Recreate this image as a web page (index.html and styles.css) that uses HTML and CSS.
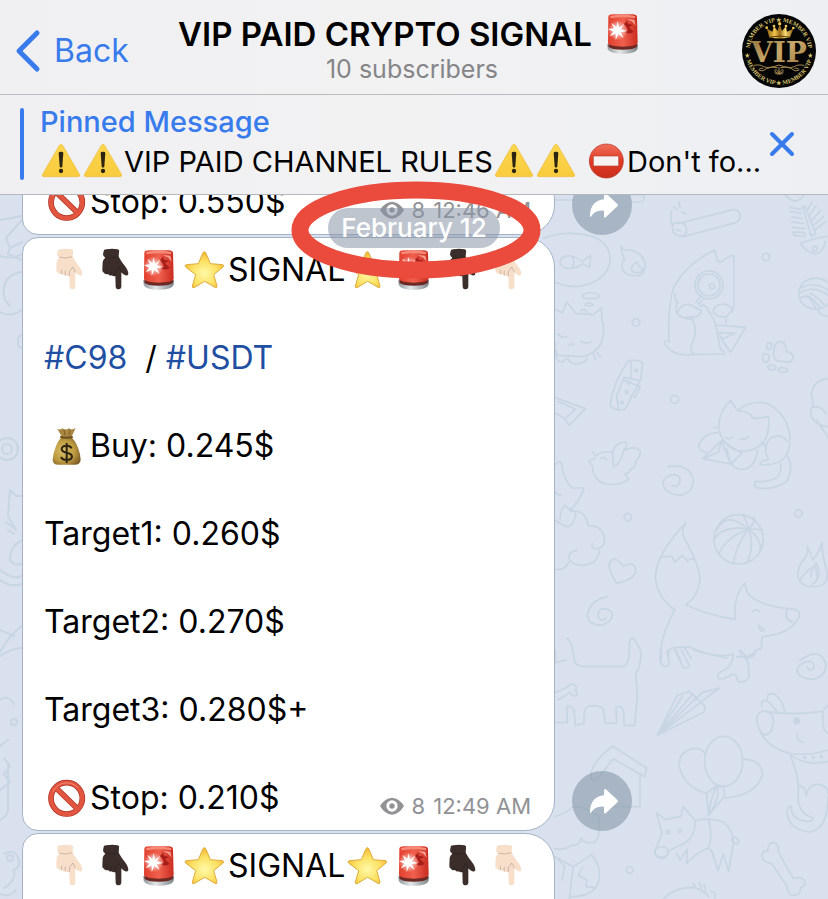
FILE: index.html
```html
<!DOCTYPE html>
<html lang="en">
<head>
<meta charset="utf-8">
<meta name="viewport" content="width=device-width, initial-scale=1">
<title>VIP PAID CRYPTO SIGNAL</title>
<link rel="stylesheet" href="styles.css">
</head>
<body>
<svg class="sprite" aria-hidden="true">
  <defs>
    <linearGradient id="glass" x1="0" y1="0" x2="1" y2="0"><stop offset="0" stop-color="#e2402f"/><stop offset=".5" stop-color="#f0604d"/><stop offset="1" stop-color="#c92c20"/></linearGradient>
    <linearGradient id="metal" x1="0" y1="0" x2="1" y2="0"><stop offset="0" stop-color="#8f989c"/><stop offset=".4" stop-color="#e3e7e8"/><stop offset="1" stop-color="#7c8488"/></linearGradient>
    <radialGradient id="glow"><stop offset="0" stop-color="#fff"/><stop offset=".4" stop-color="#fff" stop-opacity=".6"/><stop offset="1" stop-color="#fff" stop-opacity="0"/></radialGradient>
    <radialGradient id="gold" cx=".5" cy=".6" r=".55"><stop offset="0" stop-color="#fff9a8"/><stop offset=".6" stop-color="#fce265"/><stop offset="1" stop-color="#f6bd3c"/></radialGradient>
    <linearGradient id="amber" x1="0" y1="0" x2="0" y2="1"><stop offset="0" stop-color="#fbd64e"/><stop offset="1" stop-color="#f9cb3e"/></linearGradient>
    <linearGradient id="stopred" x1="0" y1="0" x2="0" y2="1"><stop offset="0" stop-color="#f0705c"/><stop offset=".5" stop-color="#e03a25"/><stop offset="1" stop-color="#c92f1c"/></linearGradient>
    <radialGradient id="sack" cx=".4" cy=".5" r=".65"><stop offset="0" stop-color="#dcc069"/><stop offset=".6" stop-color="#bd9a3f"/><stop offset="1" stop-color="#80602a"/></radialGradient>
    <linearGradient id="bronze" x1="0" y1="0" x2="1" y2="1"><stop offset="0" stop-color="#8d6c38"/><stop offset=".5" stop-color="#c9a86a"/><stop offset="1" stop-color="#9a783f"/></linearGradient>
    <linearGradient id="crown" x1="0" y1="0" x2="1" y2="0"><stop offset="0" stop-color="#8d5e12"/><stop offset=".3" stop-color="#f0c74b"/><stop offset=".5" stop-color="#9c6c17"/><stop offset=".7" stop-color="#f8db72"/><stop offset="1" stop-color="#8d5e12"/></linearGradient>
  </defs>
  <symbol id="hand" viewBox="72 252 138 132">
    <path fill="currentColor" d="M113 262Q112 256 121 256Q139 253 155 256Q161 258 159 265L158 278Q167 294 175 304Q187 319 187 330Q185 336 178 334Q170 331 166 325L166 369Q165 376 158 376Q150 376 149 368L148 336Q142 338 137 334Q130 336 126 330Q117 332 114 326Q108 324 109 317L110 294Q111 286 118 281Q111 277 111 271Z"/>
    <path class="hand-crease" d="M118 279Q135 286 157 278M126 330Q123 323 125 317M137 334Q134 326 136 320M148 336V322Q153 319 158 309Q162 314 166 325"/>
  </symbol>
  <symbol id="siren" viewBox="348 252 138 132">
    <path fill="url(#metal)" d="M370 348L462 348L461 362Q456 377 416 377Q376 377 371 362Z"/>
    <path fill="#6d2923" d="M374 344H458L459 356Q450 365 416 365Q382 365 373 356Z"/>
    <path fill="url(#glass)" d="M373 266Q374 259 387 259H446Q458 259 459 267L461 346Q452 356 416 356Q380 356 372 346Z"/>
    <path fill="#f58a78" d="M378 264Q416 257 454 264L453 271Q416 264 380 271Z"/>
    <path fill="#a81e1b" d="M420 288L431 276L430 286L447 291L435 297L449 311Q436 322 424 312L433 307Z"/>
    <path fill="#f9a091" d="M429 273L451 275L455 293L445 281Z"/>
    <circle cx="401" cy="307" r="30" fill="url(#glow)"/>
    <path fill="#fff" d="M401 279L405 299L421 287L410 304L430 309L410 313L419 330L403 318L395 336L395 317L377 325L388 311L372 303L390 301L382 284L397 297Z"/>
  </symbol>
  <symbol id="star" viewBox="486 252 138 132">
    <path fill="url(#gold)" stroke="#dfab3b" stroke-width="3" stroke-linejoin="round" d="M553 263Q556 263 558 268L571 299L608 302Q614 304 609 309L581 332L591 366Q591 373 585 370L554 352L522 371Q516 372 517 366L527 332L497 309Q492 304 499 302L535 299L548 268Q550 263 553 263Z"/>
  </symbol>
  <symbol id="forbid" viewBox="72 45 138 132">
    <circle cx="140" cy="112" r="47" fill="none" stroke="#a8301f" stroke-width="17"/>
    <path d="M106 79L174 145" stroke="#a8301f" stroke-width="17"/>
    <circle cx="140" cy="112" r="47" fill="none" stroke="#e25540" stroke-width="13"/>
    <path d="M106 79L174 145" stroke="#e25540" stroke-width="13"/>
    <path d="M98 94A46 46 0 0 1 174 80" fill="none" stroke="#f08a76" stroke-width="3"/>
  </symbol>
  <symbol id="bag" viewBox="72 279 138 132">
    <path fill="#a98742" d="M111 293Q120 299 127 292Q137 299 146 292Q155 299 167 291Q161 305 154 319H126Q119 304 111 293Z"/>
    <path fill="url(#sack)" d="M125 319H154Q166 329 174 350Q182 370 182 386Q181 401 164 401H115Q98 401 98 386Q99 370 106 351Q113 330 125 319Z"/>
    <path d="M123 318Q139 323 156 318" stroke="#6f5222" stroke-width="6" fill="none" stroke-linecap="round"/>
    <path d="M132 296L135 313M151 296L147 313" stroke="#806126" stroke-width="3"/>
    <path d="M155 352Q151 344 140 344Q126 344 125 354Q125 362 140 365Q156 368 156 377Q155 387 140 387Q127 387 123 378M140 336V396" stroke="#2e2614" stroke-width="6" fill="none"/>
  </symbol>
  <symbol id="warn" viewBox="120 426 126 120">
    <path fill="url(#amber)" stroke="#f0bd3a" stroke-width="2" stroke-linejoin="round" d="M178 436Q183 430 188 436L239 524Q240 530 234 530H132Q126 530 127 524Z"/>
    <path fill="#2b2412" d="M176 459Q176 455 183 455Q190 455 190 459L187 499Q186 503 183 503Q180 503 179 499Z"/><circle cx="183" cy="513" r="6.500" fill="#2b2412"/>
  </symbol>
  <symbol id="noentry" viewBox="513 426 126 120">
    <circle cx="577" cy="483" r="51" fill="url(#stopred)" stroke="#b8301f" stroke-width="2"/>
    <rect x="538" y="468" width="76" height="30" rx="3" fill="#f7f3f2" stroke="#b84233" stroke-width="2"/>
  </symbol>
  <symbol id="eye" viewBox="303 113 72 52">
    <path fill="currentColor" fill-rule="evenodd" d="M303 139Q318 115 339 114Q360 115 375 139Q360 164 339 165Q318 164 303 139ZM339 122A17 17 0 1 0 339 156A17 17 0 1 0 339 122Z"/><circle cx="339" cy="139" r="8" fill="currentColor"/>
  </symbol>
  <symbol id="forward" viewBox="66 360 180 180">
    <path fill="#fff" d="M165 415Q163 412 167 414L203 448Q205 450 203 453L167 487Q162 489 162 484V467Q136 464 122 486Q119 487 120 480Q122 438 162 433V417Z"/>
  </symbol>
</svg>

<div class="app">
  <header class="header">
    <nav class="topbar">
      <button class="back" type="button">
        <svg width="26" height="44" viewBox="0 0 26 44" aria-hidden="true"><path d="M22 4L4 22L22 40" fill="none" stroke="currentColor" stroke-width="5" stroke-linecap="round" stroke-linejoin="round"/></svg>
        <span>Back</span>
      </button>
      <div class="heading">
        <h1 class="title">VIP PAID CRYPTO SIGNAL <svg class="emoji" role="img" aria-label="🚨"><use href="#siren"/></svg></h1>
        <p class="subtitle">10 subscribers</p>
      </div>
      <svg class="avatar" viewBox="36 27 222 222" role="img" aria-label="VIP">
        <path id="ring-top" fill="none" d="M59 138A88 88 0 0 1 235 138"/>
        <path id="ring-bottom" fill="none" d="M46 138A101 101 0 0 0 248 138"/>
        <circle cx="147" cy="138" r="111" fill="#050505"/>
        <g class="ring-text">
          <text><textPath href="#ring-top" startOffset="50%">MEMBER VIP ★ MEMBER VIP</textPath></text>
          <text><textPath href="#ring-bottom" startOffset="50%">MEMBER VIP ★ MEMBER VIP</textPath></text>
        </g>
        <path fill="#d9c26f" d="M52 143l2 6h6l-5 4 2 6-5-4-5 4 2-6-5-4h6zM241 143l2 6h6l-5 4 2 6-5-4-5 4 2-6-5-4h6z"/>
        <path fill="url(#crown)" d="M118 97L110 70L127 80L132 64L143 78L149 57L156 78L168 64L171 80L190 71L180 97Q149 104 118 97Z"/>
        <g fill="#efc94e"><circle cx="110" cy="68" r="4"/><circle cx="132" cy="63" r="4"/><circle cx="149" cy="56" r="5"/><circle cx="168" cy="63" r="4"/><circle cx="190" cy="69" r="4"/></g>
        <path d="M117 97Q149 89 181 97" stroke="#5b3a08" stroke-width="3" fill="none"/>
        <text class="monogram" x="147" y="170">VIP</text>
        <path fill="none" stroke="#a68a50" stroke-width="3" stroke-linecap="round" d="M73 181Q90 177 101 185Q116 192 147 180Q178 192 193 185Q204 177 221 181M99 190Q85 188 88 196Q98 202 111 190Q125 183 142 188M195 190Q209 188 206 196Q196 202 183 190Q169 183 152 188M147 188V206M147 203Q137 190 134 196Q134 203 147 206Q160 203 160 196Q157 190 147 203M135 204Q141 209 147 207Q153 209 159 204"/>
      </svg>
    </nav>
    <section class="pinned" aria-label="Pinned message">
      <a class="pinned-link" href="#pinned">
        <strong class="pinned-title">Pinned Message</strong>
        <span class="pinned-text"><svg class="emoji" role="img" aria-label="⚠️"><use href="#warn"/></svg><svg class="emoji" role="img" aria-label="⚠️"><use href="#warn"/></svg>VIP PAID CHANNEL RULES<svg class="emoji" role="img" aria-label="⚠️"><use href="#warn"/></svg><svg class="emoji" role="img" aria-label="⚠️"><use href="#warn"/></svg> <svg class="emoji" role="img" aria-label="⛔"><use href="#noentry"/></svg>Don't fo...</span>
      </a>
      <button class="close" type="button" aria-label="Close">
        <svg width="26" height="26" viewBox="0 0 26 26" aria-hidden="true"><path d="M3 3L23 23M23 3L3 23" stroke="currentColor" stroke-width="4" stroke-linecap="round"/></svg>
      </button>
    </section>
  </header>

  <main class="chat">
    <svg class="wallpaper" viewBox="0 195 828 704" preserveAspectRatio="xMinYMin slice" aria-hidden="true">
      <g transform="translate(550 190) scale(.3333)">
        <path d="M15 30H70M245 15H282V28Q280 36 268 36H248M-20 145Q50 118 130 140Q190 165 178 225Q160 280 80 290Q30 290 -10 262M30 215Q36 195 62 198Q82 202 97 214L122 196L119 234L99 221Q80 236 54 236Q32 234 30 215M66 202Q78 214 66 230M213 166Q218 185 240 180Q285 190 286 230Q284 256 260 258Q220 256 216 232Q214 215 224 208Q214 190 213 166M244 240Q244 224 262 216Q264 232 280 236Q274 250 260 248Q248 248 244 240"/>
        <path d="M386 100L552 58Q572 62 570 80Q568 94 558 98L402 139Q382 142 370 126Q360 96 386 98Q408 98 410 118Q410 138 392 138M368 110Q358 84 364 64M372 50L382 58M386 36L390 52M396 66L408 72M378 118L392 124"/>
        <path d="M758 50L784 138L797 132L765 48ZM720 52L752 58M720 64L754 70M726 80L758 86M726 96L762 100M728 112L766 116M730 126L764 128V140L732 136ZM786 38L772 60M800 46L778 76M812 62L786 90M820 80L790 106M828 94L794 120M752 160Q780 148 834 138M752 162Q772 190 800 192Q820 184 826 154M802 176A6 6 0 1 0 788 176A6 6 0 1 0 802 176M706 16Q740 50 762 14"/>
        <path d="M357 456Q352 350 372 290Q410 220 494 180L503 212Q512 222 526 206Q544 192 552 200V350Q544 366 530 380Q500 384 490 364Q490 344 520 342Q544 344 548 366M357 456Q342 448 344 462Q370 500 420 494L522 492Q526 482 512 480M384 334Q376 350 380 366Q386 386 430 388M384 366Q392 340 420 344L454 362Q452 374 440 380L408 382M426 388Q446 420 426 460Q418 486 430 488M448 322L438 338M456 330L446 342M448 348Q470 340 476 366Q494 382 500 420L512 480M497 405L587 412L542 487L525 465L506 428L555 430L515 448L540 484M376 310Q372 330 384 340M528 386V402"/>
        <circle cx="477" cy="285" r="42"/><circle cx="477" cy="285" r="33"/><circle cx="486" cy="288" r="8"/><circle cx="648" cy="201" r="11"/><circle cx="258" cy="397" r="11"/><circle cx="374" cy="628" r="12"/>
        <path d="M834 278Q800 252 762 276Q738 300 750 330Q764 356 800 358Q822 354 834 342M752 294Q790 272 834 300M750 308Q790 284 834 316M752 324Q774 306 798 356M766 316Q790 322 810 354M780 310Q804 322 822 344M806 358Q802 374 834 380"/>
        <path d="M672 482Q672 458 692 454Q710 458 708 484Q734 488 728 508Q718 522 698 514Q666 516 672 482M650 468Q652 456 664 458Q668 468 660 478Q648 480 650 468M640 494Q652 486 658 500Q658 514 646 518Q634 510 640 494M652 532Q662 516 678 532Q676 542 662 540ZM684 540Q692 524 714 540Q710 550 692 546Z"/>
        <path d="M96 315Q124 300 148 315Q150 326 120 326Q96 326 96 315M104 344Q116 334 130 344Q116 352 104 344M92 362Q104 354 112 366M12 356Q26 364 38 368L50 336L78 370L130 374L154 354L156 388Q168 430 152 462Q138 488 100 500L24 496Q12 480 16 460M24 432Q34 446 50 440M94 456Q108 462 122 456M56 466Q64 460 72 464M16 490Q20 516 36 516Q48 504 54 508Q72 530 90 520Q108 516 112 504M130 490L136 508M142 488L152 502"/>
        <path d="M234 514Q254 506 278 518L272 570L226 656Q210 668 180 648Q188 580 234 514M244 516V566L222 562L200 618L206 660M220 570L250 582L270 590L256 622L242 616M244 566L268 572M12 622L106 656L58 706L44 686L14 668M24 634L76 658L44 686"/><circle cx="258" cy="542" r="4"/><circle cx="236" cy="578" r="4"/><circle cx="230" cy="606" r="4"/><circle cx="216" cy="638" r="4"/>
        <path d="M834 566Q790 570 784 612Q792 640 788 650Q776 660 786 682Q800 708 834 710M790 652Q812 644 828 672"/>
      </g>
      <g transform="translate(550 420) scale(.3333)">
        <path d="M506 20Q508 -30 542 -58L564 -26Q590 -30 612 -4L656 -10Q660 40 640 68Q600 106 550 88Q510 64 506 20M565 -30Q600 -60 650 -50Q712 -20 720 50Q722 80 708 108Q684 138 632 134Q626 124 656 118Q636 86 660 56Q690 36 712 64M712 108Q732 140 712 182Q680 210 624 204Q608 198 616 184Q660 188 684 170Q696 150 692 130M502 38Q458 40 446 78Q452 94 468 98M514 62L458 116L542 132L576 100ZM514 62L506 96L458 116M514 62L542 132L530 86M544 132Q560 154 590 146Q616 136 624 90M526 52Q536 60 548 52M570 56Q584 60 596 50M490 22L500 24M634 66L646 78"/>
        <path d="M128 96L138 108Q154 92 180 96L188 100Q192 66 228 66Q234 78 220 92Q248 76 270 90Q274 110 256 124Q262 140 240 148Q244 158 224 162L236 178Q210 198 168 192Q128 180 128 140L116 122L134 114M188 100L190 140Q214 130 220 92M152 116Q164 106 170 120M354 140Q420 130 430 180Q430 218 390 226Q344 222 338 190Q344 164 376 164Q396 170 388 190Q380 204 366 196"/>
        <circle cx="233" cy="292" r="11"/><circle cx="745" cy="280" r="11"/>
        <path d="M12 140Q24 120 34 128Q40 180 66 204L102 204Q92 240 60 270Q80 268 76 290Q64 330 40 316L12 300M30 300Q30 270 44 256L64 274Q104 266 116 318Q160 314 164 362Q158 390 134 386Q120 380 128 372M148 392Q144 434 98 436Q64 436 58 416Q54 394 80 392M58 424Q44 454 12 448M12 210Q20 226 34 226"/>
        <path d="M200 490Q174 452 178 428Q194 402 220 440Q250 420 258 450Q254 480 200 490M172 530Q120 540 112 586Q112 612 150 616Q190 606 186 580Q176 562 152 568Q136 582 150 598Q162 604 168 594"/>
        <circle cx="566" cy="358" r="74"/><path d="M596 328Q530 270 500 330M596 328Q520 314 492 358M596 328Q530 350 506 402M596 328Q560 370 550 430M596 328Q614 370 594 424M596 328Q638 360 630 394M596 328Q620 326 636 330M596 328Q590 300 580 288M596 328Q620 300 610 292"/>
        <path d="M408 308Q320 400 316 470Q320 530 374 570Q330 650 330 720M408 308Q390 330 404 356Q450 440 450 480Q444 530 408 554Q470 584 556 598Q548 530 584 490Q590 520 602 530Q640 560 734 568Q754 574 746 594Q720 644 636 650L634 686Q612 690 612 706Q580 730 568 690M334 412L364 408L376 426L396 406L412 422L432 414M710 570Q704 604 730 606M608 574Q620 564 628 576M626 616L644 630Q630 640 626 616M356 720Q352 690 364 684L416 680Q460 700 530 714M376 688L392 720M404 684L424 716"/>
        <path d="M772 380Q776 400 766 412Q736 450 746 476Q760 508 810 498Q834 490 832 456Q816 410 816 366Q810 396 788 420Q782 400 772 380M752 478Q770 450 794 438Q800 450 802 474M782 470Q784 450 798 428Q820 470 786 494M800 0L834 52"/>
      </g>
      <g transform="translate(550 650) scale(.3333)">
        <path d="M50 -35Q66 -30 74 34Q76 50 120 50H220Q240 48 238 -20Q242 -46 254 -30L272 0Q276 40 258 70L262 140L254 226H222V190Q216 162 198 172L200 220H166L160 176Q146 164 116 168Q100 170 102 220L76 226L72 180Q56 160 50 172L52 218H12M12 130L52 112Q60 98 74 104Q84 112 76 120Q86 132 78 138Q66 138 60 128L24 150M16 0V38L48 30"/>
        <path d="M322 256L382 136L418 124L466 170L462 186ZM322 256L508 114L456 128L322 256M322 256L428 132L436 142M322 256L398 138M334 0L332 40Q344 56 358 44L352 0M374 0L398 50Q412 58 418 46L394 0M430 0Q510 26 550 12Q550 46 522 60Q500 70 504 84Q516 92 546 74Q560 70 564 94Q582 100 596 84Q600 20 570 0M560 20Q606 26 620 0M750 32Q810 -14 828 44Q826 84 786 88Q738 84 742 56Q754 34 780 34Q800 42 788 58Q778 64 772 52"/>
        <path d="M132 394L122 384Q120 340 188 288L290 354L284 380L190 326L140 390M270 374V470H190M620 208Q624 180 648 184Q674 194 670 220Q666 252 646 254Q626 250 620 208M648 184Q720 198 820 184Q812 240 834 250M820 180L834 166M632 248Q660 300 730 312Q790 316 834 300M636 170Q630 140 660 158L680 184M652 148Q650 126 672 132Q700 150 704 186M742 252Q738 274 760 276M720 316Q750 380 744 440Q744 490 790 504Q790 516 770 514Q720 508 724 468Q706 470 714 502Q724 540 780 546Q834 536 834 440M746 410Q766 404 768 438Q776 400 810 404Q834 410 834 430M724 316Q770 350 834 334"/><circle cx="740" cy="212" r="8" fill="#c8d5e2"/><circle cx="764" cy="322" r="3"/><circle cx="790" cy="322" r="3"/><circle cx="814" cy="320" r="3"/>
        <ellipse cx="521" cy="334" rx="57" ry="75"/><path d="M466 310Q450 292 426 296Q386 306 388 350Q402 412 470 430M578 328Q632 326 638 372Q620 436 526 444M498 408L470 430L476 496L524 438L522 412ZM500 408Q480 450 476 496M500 408Q514 440 476 496M320 490L336 552L314 604Q316 624 336 626Q356 620 354 604L410 576Q440 550 434 510L400 470L392 500L346 508L320 490M434 514Q460 500 520 516Q550 540 550 580L544 616L536 664L520 612L504 662L484 600M550 560Q570 566 566 580Q556 586 544 570M474 506Q490 550 476 594Q450 600 410 640L412 598L390 630L380 610M476 596Q486 600 492 620"/><ellipse cx="335" cy="606" rx="20" ry="16"/><circle cx="354" cy="546" r="5"/><circle cx="389" cy="542" r="5"/>
        <path d="M664 640Q632 634 636 612Q642 600 654 602Q652 578 672 578Q690 584 684 604L730 686Q760 676 766 698Q764 710 752 712Q754 736 730 736Q710 732 712 710ZM340 747Q370 712 430 712Q460 718 476 740M430 700L438 714M448 698L454 716M462 704L468 724M482 724Q500 724 494 747M14 500Q50 490 66 472Q96 464 146 500Q154 570 130 578Q100 580 94 564Q90 590 62 586Q50 602 14 596M14 620L70 650L124 614Q150 640 148 680Q144 740 62 740M70 650L58 747M98 652L84 676L110 690L108 710L132 712M20 624L44 650L36 690"/><circle cx="239" cy="660" r="10"/>
      </g>
      <g transform="translate(0 190)">
        <path d="M0 30Q12 28 22 26M6 48L22 30M6 48L10 58L22 52M10 58L8 64L22 70M0 66Q12 70 22 64M22 82Q6 84 4 98Q2 108 10 116M0 122Q10 128 22 120M22 145Q18 146 18 150V156L22 158"/>
        <circle cx="7" cy="259" r="11"/><circle cx="7" cy="259" r="5"/>
        <path d="M10 300L16 306H22M10 300L8 326L16 340M6 332L14 338M8 340L14 344M22 350Q10 356 10 370Q14 376 22 374M0 380Q12 390 22 386M0 390Q10 398 22 394M0 462Q10 444 22 436M0 466Q12 458 22 458M0 440L14 446M0 510Q8 504 14 514M0 556L8 550M4 568L10 576L4 584L10 592L0 600M8 574V620Q6 628 0 630M4 664Q14 658 18 668Q22 676 14 680Q16 692 4 698M0 704Q10 708 16 700"/>
        <circle cx="14" cy="532" r="3"/><circle cx="10" cy="668" r="3"/>
      </g>
    </svg>

    <ol class="messages">
      <li class="message">
        <article class="bubble">
          <div class="last-line">
            <p><svg class="emoji" role="img" aria-label="🚫"><use href="#forbid"/></svg>Stop: 0.550$</p>
            <p class="meta"><svg class="eye" role="img" aria-label="Views"><use href="#eye"/></svg><span>8</span><time>12:46 AM</time></p>
          </div>
        </article>
        <button class="share" type="button" aria-label="Forward"><svg aria-hidden="true"><use href="#forward"/></svg></button>
      </li>
      <li class="message">
        <article class="bubble">
          <p><svg class="emoji light" role="img" aria-label="👇🏻"><use href="#hand"/></svg><svg class="emoji dark" role="img" aria-label="👇🏿"><use href="#hand"/></svg><svg class="emoji" role="img" aria-label="🚨"><use href="#siren"/></svg><svg class="emoji" role="img" aria-label="⭐"><use href="#star"/></svg>SIGNAL<svg class="emoji" role="img" aria-label="⭐"><use href="#star"/></svg><svg class="emoji" role="img" aria-label="🚨"><use href="#siren"/></svg><svg class="emoji dark" role="img" aria-label="👇🏿"><use href="#hand"/></svg><svg class="emoji light" role="img" aria-label="👇🏻"><use href="#hand"/></svg></p>
          <p><a href="#C98">#C98</a>&nbsp; / <a href="#USDT">#USDT</a></p>
          <p><svg class="emoji" role="img" aria-label="💰"><use href="#bag"/></svg>Buy: 0.245$</p>
          <p>Target1: 0.260$</p>
          <p>Target2: 0.270$</p>
          <p>Target3: 0.280$+</p>
          <div class="last-line">
            <p><svg class="emoji" role="img" aria-label="🚫"><use href="#forbid"/></svg>Stop: 0.210$</p>
            <p class="meta"><svg class="eye" role="img" aria-label="Views"><use href="#eye"/></svg><span>8</span><time>12:49 AM</time></p>
          </div>
        </article>
        <button class="share" type="button" aria-label="Forward"><svg aria-hidden="true"><use href="#forward"/></svg></button>
      </li>
      <li class="message">
        <article class="bubble">
          <p><svg class="emoji light" role="img" aria-label="👇🏻"><use href="#hand"/></svg><svg class="emoji dark" role="img" aria-label="👇🏿"><use href="#hand"/></svg><svg class="emoji" role="img" aria-label="🚨"><use href="#siren"/></svg><svg class="emoji" role="img" aria-label="⭐"><use href="#star"/></svg>SIGNAL<svg class="emoji" role="img" aria-label="⭐"><use href="#star"/></svg><svg class="emoji" role="img" aria-label="🚨"><use href="#siren"/></svg><svg class="emoji dark" role="img" aria-label="👇🏿"><use href="#hand"/></svg><svg class="emoji light" role="img" aria-label="👇🏻"><use href="#hand"/></svg></p>
        </article>
      </li>
    </ol>
  </main>

  <div class="date-marker">
    <time class="date">February 12</time>
    <svg class="circle-mark" viewBox="0 0 250 98" aria-hidden="true"><ellipse cx="125" cy="49" rx="116" ry="40" fill="none" stroke="#ea4b3c" stroke-width="17"/></svg>
  </div>
</div>
</body>
</html>
```
FILE: styles.css
```css
* { box-sizing: border-box; }

body {
  margin: 0;
  font-family: Inter, "Liberation Sans", sans-serif;
  color: #000;
  background: #d8e1ed;
}

h1, p, ol { margin: 0; padding: 0; }

button {
  border: 0;
  padding: 0;
  background: none;
  font: inherit;
  color: inherit;
}

a { color: #1f4fa3; text-decoration: none; }

.sprite { position: absolute; width: 0; height: 0; }

.app {
  position: relative;
  display: flex;
  flex-direction: column;
  height: 100vh;
  overflow: hidden;
}

/* Header */
.header { background: linear-gradient(90deg, #f0f0f2, #f2f2f3 50%, #edeff2); }

.topbar {
  display: grid;
  grid-template-columns: 1fr auto 1fr;
  align-items: center;
  padding: 10px 12px 2px;
  height: 95px;
  border-bottom: 1px solid #babbc0;
}

.back {
  display: flex;
  align-items: center;
  gap: 13px;
  justify-self: start;
  padding-left: 3px;
  font-size: 32px;
  line-height: 40px;
  color: #387bec;
}

.heading { margin-right: 4px; text-align: center; white-space: nowrap; }

.title {
  display: flex;
  align-items: center;
  justify-content: center;
  gap: 8px;
  font-size: 33px;
  line-height: 36px;
  font-weight: 600;
}

.title .emoji { margin: -4px 0; }

.subtitle { font-size: 25px; line-height: 34px; color: #858588; }

.avatar { width: 74px; height: 74px; justify-self: end; }

.ring-text {
  font: bold 18px "Liberation Serif", "DejaVu Serif", serif;
  fill: #d9c26f;
  text-anchor: middle;
}

.monogram {
  font: bold 84px "DejaVu Serif", serif;
  fill: url(#bronze);
  text-anchor: middle;
}

.pinned {
  display: flex;
  align-items: center;
  gap: 8px;
  padding: 7px 33px 12px 20px;
  border-bottom: 1px solid #b5b8bf;
}

.pinned-link {
  position: relative;
  flex: 1;
  min-width: 0;
  padding-left: 20px;
  color: #000;
}

.pinned-link::before {
  content: "";
  position: absolute;
  left: 0;
  top: 6px;
  bottom: 2px;
  width: 4px;
  border-radius: 2px;
  background: #387bec;
}

.pinned-title, .pinned-text {
  display: block;
  font-size: 29px;
  line-height: 40px;
  white-space: nowrap;
}

.pinned-title { font-weight: 500; color: #387bec; }
.pinned-text .emoji { width: 42px; height: 40px; }

.close { display: flex; padding-top: 4px; color: #387bec; }

/* Chat */
.chat {
  position: relative;
  flex: 1;
  min-height: 0;
  overflow: hidden;
}

.wallpaper {
  position: absolute;
  inset: 0;
  width: 100%;
  height: 100%;
  fill: none;
  stroke: #c8d5e2;
  stroke-width: 5;
  stroke-linejoin: round;
  stroke-linecap: round;
}

.wallpaper g:last-child { stroke-width: 2; }

/* The list is scrolled so that its first message is partly under the header. */
.messages {
  position: relative;
  display: flex;
  flex-direction: column;
  gap: 2px;
  margin-top: -26px;
  padding: 0 22px;
  list-style: none;
}

.message { display: flex; align-items: flex-end; gap: 17px; }

.bubble {
  display: flex;
  flex-direction: column;
  gap: 44px;
  width: 100%;
  max-width: 533px;
  padding: 10px 23px 10px 21px;
  border: 1px solid #a5b3c6;
  border-radius: 16px 30px 30px 16px;
  background: #fff;
  font-size: 32px;
  line-height: 44px;
  white-space: nowrap;
}

.message:last-child .bubble { padding-bottom: 54px; }

.emoji {
  width: 46px;
  height: 44px;
  vertical-align: top;
}

.light { color: #f7dfca; }
.dark { color: #3b2d29; }

.hand-crease {
  fill: none;
  stroke: #000;
  stroke-opacity: .18;
  stroke-width: 3;
}

.last-line {
  display: flex;
  align-items: flex-end;
  justify-content: space-between;
}

.meta {
  display: flex;
  align-items: center;
  gap: 8px;
  font-size: 22px;
  line-height: 28px;
  color: #929295;
}

.eye { width: 24px; height: 18px; }

.share {
  flex: none;
  width: 60px;
  height: 60px;
  border-radius: 50%;
  background: rgba(128, 145, 163, .55);
}

.share svg { display: block; width: 60px; height: 60px; }

/* Floating date */
.date-marker {
  position: absolute;
  top: 208px;
  left: 0;
  right: 0;
  display: flex;
  justify-content: center;
}

.date {
  padding: 0 13px;
  border-radius: 20px;
  background: rgba(136, 149, 167, .55);
  font-size: 26px;
  line-height: 40px;
  font-weight: 500;
  color: #fff;
}

.circle-mark {
  position: absolute;
  top: -27px;
  left: calc(50% - 123px);
  width: 250px;
  height: 98px;
}
```
